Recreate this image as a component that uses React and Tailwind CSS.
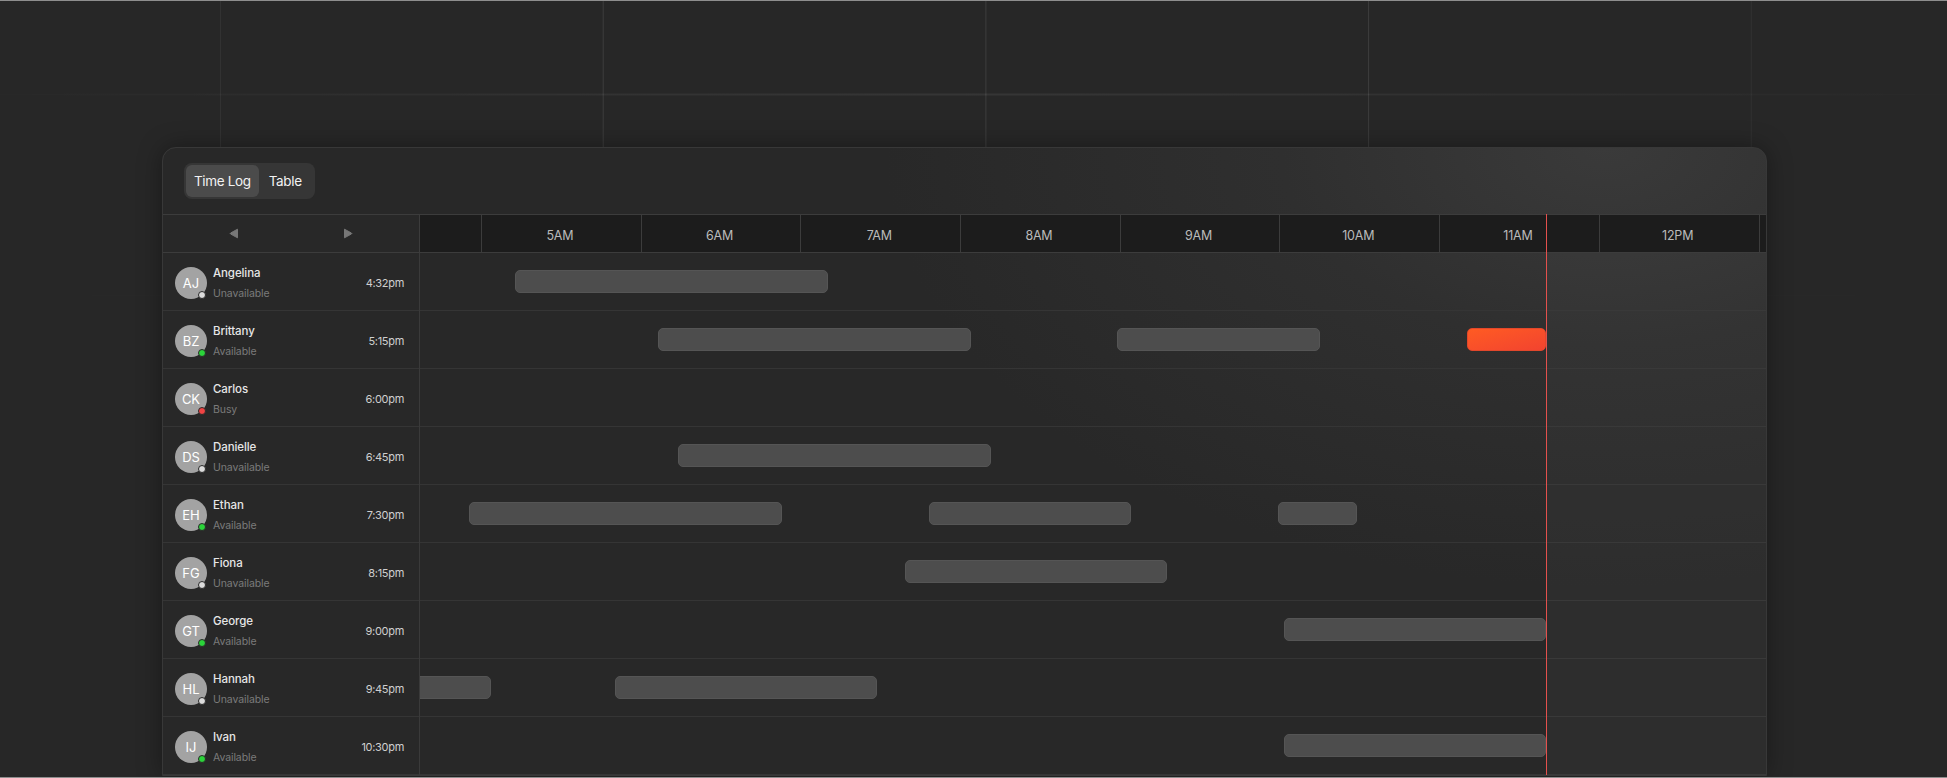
import React from 'react';

const people = [
  { initials: 'AJ', name: 'Angelina', status: 'Unavailable', time: '4:32pm', bars: [{ left: 95, width: 313 }] },
  {
    initials: 'BZ',
    name: 'Brittany',
    status: 'Available',
    time: '5:15pm',
    bars: [
      { left: 238, width: 313 },
      { left: 697, width: 203 },
      { left: 1047, width: 79, live: true },
    ],
  },
  { initials: 'CK', name: 'Carlos', status: 'Busy', time: '6:00pm', bars: [] },
  { initials: 'DS', name: 'Danielle', status: 'Unavailable', time: '6:45pm', bars: [{ left: 258, width: 313 }] },
  {
    initials: 'EH',
    name: 'Ethan',
    status: 'Available',
    time: '7:30pm',
    bars: [
      { left: 49, width: 313 },
      { left: 509, width: 202 },
      { left: 858, width: 79 },
    ],
  },
  { initials: 'FG', name: 'Fiona', status: 'Unavailable', time: '8:15pm', bars: [{ left: 485, width: 262 }] },
  { initials: 'GT', name: 'George', status: 'Available', time: '9:00pm', bars: [{ left: 864, width: 262 }] },
  {
    initials: 'HL',
    name: 'Hannah',
    status: 'Unavailable',
    time: '9:45pm',
    bars: [
      { left: -30, width: 101 },
      { left: 195, width: 262 },
    ],
  },
  { initials: 'IJ', name: 'Ivan', status: 'Available', time: '10:30pm', bars: [{ left: 864, width: 262 }] },
];

const hours = ['5AM', '6AM', '7AM', '8AM', '9AM', '10AM', '11AM', '12PM'];

const dotColor = {
  Available: 'bg-[#2bd43a]',
  Unavailable: 'bg-[#dcdcdc]',
  Busy: 'bg-[#f04444]',
};

// current time marker, px from the start of the timeline
const NOW = 1126;

const Avatar = ({ initials, status }) => (
  <div className="relative w-8 h-8 shrink-0 rounded-full bg-[#a3a3a3] flex items-center justify-center">
    <span className="text-[13px] text-white leading-none">{initials}</span>
    <span
      className={`absolute right-[1px] bottom-[0px] w-[8px] h-[8px] rounded-full border border-[#2a2a2a] ${dotColor[status]}`}
    />
  </div>
);

export default function App() {
  return (
    <div className="relative h-[778px] overflow-hidden bg-[#272727] border-y border-[#8e8e8e] font-[family-name:Inter,sans-serif]">
      {/* background grid */}
      <div className="absolute inset-0 bg-[linear-gradient(to_right,rgba(255,255,255,0.1)_1px,transparent_1px),linear-gradient(to_bottom,rgba(255,255,255,0.035)_1px,transparent_1px)] bg-[size:382.7px_201px] bg-[position:220px_93px] [mask-image:radial-gradient(ellipse_60%_80%_at_50%_0%,black_35%,transparent_100%)]" />
      <div className="absolute left-0 right-0 top-[92px] h-[3px] bg-gradient-to-r from-transparent via-white/[0.035] to-transparent" />

      {/* card */}
      <div className="relative ml-[162px] mt-[146px] w-[1605px] rounded-t-[14px] border border-[#383838] bg-[radial-gradient(ellipse_45%_70%_at_90%_0%,#3a3a3a_0%,#2f2f2f_45%,#282828_100%)] shadow-[0_0_24px_rgba(0,0,0,0.35)] overflow-hidden">
        {/* top bar */}
        <div className="h-[66px] pl-[21px] pt-[15px]">
          <div className="inline-flex h-[36px] items-center rounded-[8px] bg-[#363636] p-[2px]">
            <button className="h-[32px] px-[8px] rounded-[6px] bg-[#4b4b4b] text-[13.5px] tracking-[-0.35px] text-[#f2f2f2]">
              Time Log
            </button>
            <button className="h-[32px] pl-[10px] pr-[11px] rounded-[6px] text-[13.5px] tracking-[-0.35px] text-[#f2f2f2]">
              Table
            </button>
          </div>
        </div>

        {/* hour header */}
        <div className="flex h-[39px] border-y border-[#3c3c3c]">
          <div className="w-[257px] shrink-0 border-r border-[#3c3c3c] flex items-center justify-center gap-[104px]">
            <svg width="10" height="11" viewBox="0 0 10 11">
              <path d="M8.5 1.2 L1.6 5 Q0.8 5.5 1.6 6 L8.5 9.8 Z" fill="#777" stroke="#777" strokeLinejoin="round" />
            </svg>
            <svg width="10" height="11" viewBox="0 0 10 11">
              <path d="M1.5 1.2 L8.4 5 Q9.2 5.5 8.4 6 L1.5 9.8 Z" fill="#777" stroke="#777" strokeLinejoin="round" />
            </svg>
          </div>
          <div className="relative flex flex-1 bg-[#1c1c1c] overflow-hidden">
            <div className="w-[62px] shrink-0 border-r border-[#3c3c3c]" />
            {hours.map((h) => (
              <div
                key={h}
                className="w-[159.7px] shrink-0 border-r border-[#3c3c3c] flex items-center justify-center pt-[6px] pr-[3px] text-[12.5px] tracking-[-0.2px] text-[#bababa]"
              >
                {h}
              </div>
            ))}
          </div>
        </div>

        {/* rows */}
        <div className="flex">
          <div className="w-[257px] shrink-0 border-r border-[#3a3a3a]">
            {people.map((p) => (
              <div key={p.name} className="flex items-center h-[58px] border-b border-[#353535] pl-[12px] pr-[15px] pt-[3px]">
                <Avatar initials={p.initials} status={p.status} />
                <div className="ml-[6px] flex flex-col gap-[5px]">
                  <span className="text-[11.5px] leading-[16px] font-medium tracking-[-0.1px] text-[#e6e6e6]">
                    {p.name}
                  </span>
                  <span className="text-[10.5px] leading-[16px] tracking-[-0.1px] text-[#7b7b7b]">{p.status}</span>
                </div>
                <span className="ml-auto text-[11px] tracking-[-0.3px] text-[#cfcfcf]">{p.time}</span>
              </div>
            ))}
          </div>

          <div className="relative flex-1 overflow-hidden">
            {people.map((p) => (
              <div key={p.name} className="relative h-[58px] border-b border-[#353535]">
                {p.bars.map((b, i) => (
                  <div
                    key={i}
                    className={
                      b.live
                        ? 'absolute top-[17px] h-[23px] rounded-[5px] border border-[#e2472b] bg-gradient-to-br from-[#ff5b22] to-[#f2432f]'
                        : 'absolute top-[17px] h-[23px] rounded-[5px] border border-[#555] bg-[#4d4d4d]'
                    }
                    style={{ left: b.left, width: b.width }}
                  />
                ))}
              </div>
            ))}
            {/* future area */}
            <div className="absolute top-0 bottom-0 right-0 bg-white/[0.025]" style={{ left: NOW }} />
          </div>
        </div>

        {/* now line */}
        <div className="absolute top-[66px] bottom-0 w-px bg-[#e4504d]" style={{ left: 257 + NOW }} />
      </div>
    </div>
  );
}
